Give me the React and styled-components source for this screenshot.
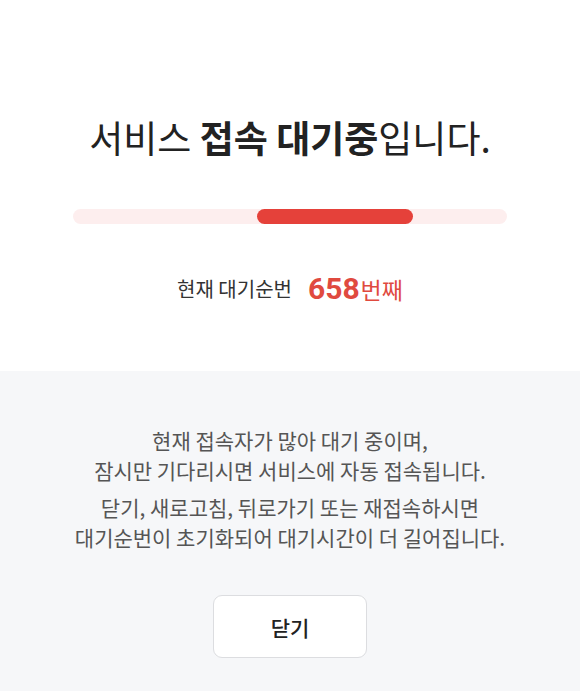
import React from 'react'
import styled, { createGlobalStyle } from 'styled-components'

const GlobalStyle = createGlobalStyle`
    html, body {
        margin: 0;
        padding: 0;
        background: #f6f7f9;
    }
    body {
        font-family: "Noto Sans CJK KR", "Noto Sans", sans-serif;
        color: #222;
    }
`

const Page = styled.div`
    display: flex;
    flex-direction: column;
    min-height: 691px;
`

const TopSection = styled.section`
    background: #fff;
    padding: 112px 73px 63px;
    display: flex;
    flex-direction: column;
    align-items: center;
`

const Title = styled.h1`
    margin: 0;
    font-size: 37px;
    line-height: 50px;
    font-weight: 400;
    color: #222;

    strong {
        font-weight: 700;
    }
`

const Track = styled.div`
    margin-top: 47px;
    width: 100%;
    height: 15px;
    border-radius: 8px;
    background: #fdeeee;
    position: relative;
    overflow: hidden;
`

const Fill = styled.div`
    position: absolute;
    top: 0;
    bottom: 0;
    border-radius: 8px;
    background: #e5413a;
`

const QueueRow = styled.div`
    margin-top: 44px;
    height: 40px;
    display: flex;
    align-items: center;
    gap: 16px;
`

const QueueLabel = styled.span`
    font-size: 20px;
    color: #333;
`

const QueueNumber = styled.span`
    color: #e04a3f;
    font-size: 23px;

    b {
        font-family: "Roboto", "Noto Sans", sans-serif;
        font-size: 30px;
        font-weight: 700;
        margin-right: 1px;
    }
`

const BottomSection = styled.section`
    flex: 1;
    background: #f6f7f9;
    padding: 54px 20px 33px;
    display: flex;
    flex-direction: column;
    align-items: center;
`

const Notice = styled.p`
    margin: 0 0 ${p => p.gap || 0}px;
    font-size: 21px;
    line-height: 30px;
    color: #555;
    text-align: center;
`

const CloseButton = styled.button`
    margin-top: 43px;
    width: 154px;
    height: 63px;
    border: 1px solid #dcdde0;
    border-radius: 9px;
    background: #fff;
    font-family: inherit;
    font-size: 21px;
    font-weight: 500;
    color: #222;
    cursor: pointer;
`

const App = () => {
    const progress = { left: 42.5, width: 35.8 }
    return (
        <>
            <GlobalStyle />
            <Page>
                <TopSection>
                    <Title>서비스 <strong>접속 대기중</strong>입니다.</Title>
                    <Track>
                        <Fill style={{ left: `${progress.left}%`, width: `${progress.width}%` }} />
                    </Track>
                    <QueueRow>
                        <QueueLabel>현재 대기순번</QueueLabel>
                        <QueueNumber><b>658</b>번째</QueueNumber>
                    </QueueRow>
                </TopSection>
                <BottomSection>
                    <Notice gap={7}>
                        현재 접속자가 많아 대기 중이며,<br />
                        잠시만 기다리시면 서비스에 자동 접속됩니다.
                    </Notice>
                    <Notice>
                        닫기, 새로고침, 뒤로가기 또는 재접속하시면<br />
                        대기순번이 초기화되어 대기시간이 더 길어집니다.
                    </Notice>
                    <CloseButton>닫기</CloseButton>
                </BottomSection>
            </Page>
        </>
    )
}

export default App
